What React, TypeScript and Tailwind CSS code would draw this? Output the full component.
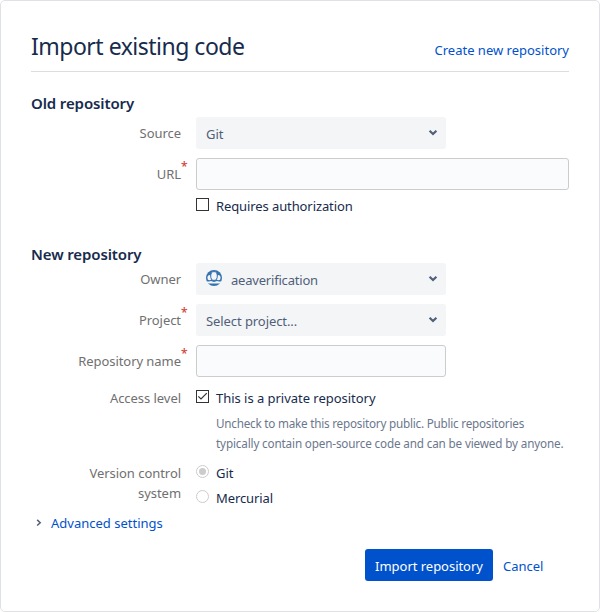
import type { ReactNode } from 'react';

function Field({ label, required, className = '', children }: {
  label: ReactNode;
  required?: boolean;
  className?: string;
  children: ReactNode;
}) {
  return (
    <div className={`flex items-start ${className}`}>
      <div className="relative mr-[15px] mt-[6px] w-[150px] shrink-0 text-right leading-5 tracking-[-0.05px] text-[#707070]">
        {label}
        {required && (
          <span className="absolute left-full top-[-7px] text-[12px] font-medium leading-5 text-[#d04437]">*</span>
        )}
      </div>
      {children}
    </div>
  );
}

function Chevron() {
  return (
    <svg className="ml-auto mr-[8px] shrink-0" width="10" height="8" viewBox="0 0 10 8" fill="none">
      <path d="M1.6 1.8 L5 5 L8.4 1.8" stroke="#505f79" strokeWidth="2.2" />
    </svg>
  );
}

function Avatar() {
  return (
    <svg className="mr-[9px] -mt-[2px] shrink-0" width="16" height="16" viewBox="0 0 16 16">
      <circle cx="8" cy="8" r="8" fill="#3572b0" />
      <ellipse cx="3.5" cy="7.7" rx="2.1" ry="2.6" fill="#f4f5f7" />
      <ellipse cx="12.5" cy="7.7" rx="2.1" ry="2.6" fill="#f4f5f7" />
      <ellipse cx="8" cy="6" rx="3.3" ry="4.4" fill="#f4f5f7" stroke="#3572b0" strokeWidth="1" />
      <path d="M0 11.6 H3 L5 11 L8 12 L11 11 L13 11.6 H16 V13.6 H0 Z" fill="#f4f5f7" />
    </svg>
  );
}

function Select({ children }: { children: ReactNode }) {
  return (
    <div className="flex h-8 w-[250px] items-center rounded-[3px] bg-[#f4f5f7] pl-[10px] text-[#505f79]">
      {children}
      <Chevron />
    </div>
  );
}

function Check({ checked }: { checked?: boolean }) {
  return (
    <svg className="mr-[7px] shrink-0" width="13" height="13" viewBox="0 0 13 13" fill="none">
      <rect x="0.5" y="0.5" width="12" height="12" fill="#fff" stroke="#333" />
      {checked && <path d="M2.3 6.3 L5 9 L10.8 3.2" stroke="#333" strokeWidth="1.2" />}
    </svg>
  );
}

function Radio({ checked }: { checked?: boolean }) {
  return (
    <svg className="mr-[7px] shrink-0" width="13" height="13" viewBox="0 0 13 13" fill="none">
      <circle cx="6.5" cy="6.5" r="6" fill="#fff" stroke="#ccc" />
      {checked && <circle cx="6.5" cy="6.5" r="3.5" fill="#ccc" />}
    </svg>
  );
}

export default function App() {
  return (
    <div className="h-[612px] w-[600px] rounded-[5px] border border-[#dfe1e6] bg-white px-[30px] font-['Noto_Sans',sans-serif] text-[13px] leading-5 text-[#172b4d]">
      <header className="flex h-[71px] items-end justify-between border-b border-[#dddddf] pb-[9px]">
        <h1 className="mb-px text-[23px] leading-[30px] tracking-[-0.5px]">Import existing code</h1>
        <a className="mb-[2px] text-[#0052cc]">Create new repository</a>
      </header>

      <h2 className="mt-[21px] text-[15px] font-semibold leading-5 tracking-[-0.12px]">Old repository</h2>
      <Field label="Source" className="mt-1">
        <Select><span className="pt-[2px]">Git</span></Select>
      </Field>
      <Field label="URL" required className="mt-[9px]">
        <div className="h-8 w-[373px] rounded-[3px] border border-[#ccc] bg-[#fafbfc]" />
      </Field>
      <label className="ml-[165px] mt-[6px] flex tracking-[-0.1px]">
        <span className="pt-[2px]"><Check /></span>
        Requires authorization
      </label>

      <h2 className="mt-[28px] text-[15px] font-semibold leading-5 tracking-[-0.12px]">New repository</h2>
      <Field label="Owner" className="-mt-px">
        <Select><Avatar /><span className="pt-[2px] tracking-[-0.2px]">aeaverification</span></Select>
      </Field>
      <Field label="Project" required className="mt-[9px]">
        <Select><span className="pt-[2px] tracking-[-0.08px]">Select project...</span></Select>
      </Field>
      <Field label="Repository name" required className="mt-[9px]">
        <div className="h-8 w-[250px] rounded-[3px] border border-[#ccc] bg-[#fafbfc]" />
      </Field>
      <Field label="Access level" className="mt-[5px]">
        <div className="pt-[6px]">
          <label className="flex tracking-[-0.03px]">
            <span className="pt-[2px]"><Check checked /></span>
            This is a private repository
          </label>
          <p className="ml-5 mt-[5px] whitespace-nowrap text-[11.7px] leading-5 tracking-[-0.15px] text-[#6b778c]">
            <span className="tracking-[-0.22px]">Uncheck to make this repository public. Public repositories</span>
            <br />
            typically contain open-source code and can be viewed by anyone.
          </p>
        </div>
      </Field>
      <Field label={<>Version control<br />system</>} className="mt-1">
        <div className="flex flex-col gap-[5px] pt-[6px]">
          <label className="flex"><span className="pt-[2px]"><Radio checked /></span>Git</label>
          <label className="flex tracking-[-0.1px]"><span className="pt-[2px]"><Radio /></span>Mercurial</label>
        </div>
      </Field>

      <div className="mt-[5px] flex items-center text-[#0052cc]">
        <svg className="ml-[5px] mr-[9px]" width="6" height="8" viewBox="0 0 6 8" fill="none">
          <path d="M1.2 0.9 L4.2 3.7 L1.2 6.5" stroke="#505f79" strokeWidth="1.5" />
        </svg>
        <a>Advanced settings</a>
      </div>

      <footer className="ml-[334px] mt-4 flex items-center">
        <button className="h-8 w-[128px] whitespace-nowrap rounded-[3px] bg-[#0052cc] pt-[2px] tracking-[-0.03px] text-white">
          Import repository
        </button>
        <a className="ml-[10px] pt-[2px] text-[#0052cc]">Cancel</a>
      </footer>
    </div>
  );
}
